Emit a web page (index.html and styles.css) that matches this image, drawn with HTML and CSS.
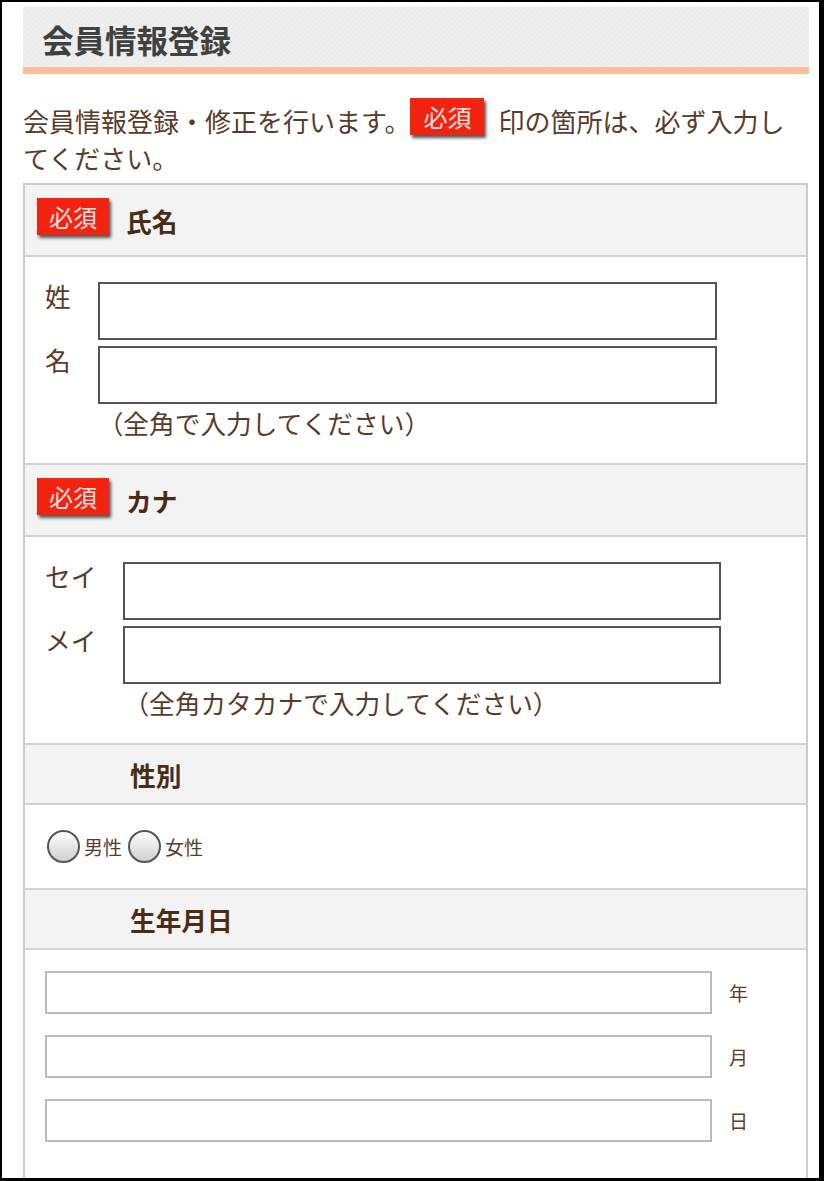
FILE: index.html
```html
<!DOCTYPE html>
<html lang="ja">
<head>
<meta charset="utf-8">
<title>会員情報登録</title>
<link rel="stylesheet" href="styles.css">
</head>
<body>
<div class="frame">
  <h1 class="title">会員情報登録</h1>
  <p class="intro">会員情報登録・修正を行います。<span class="badge badge-inline">必須</span>印の箇所は、必ず入力してください。</p>
  <div class="form">
    <div class="head req"><span class="badge">必須</span><span class="head-label">氏名</span></div>
    <div class="body pairs">
      <div class="pair-grid">
        <span class="pair-label">姓</span>
        <div class="field"><input class="text" type="text"></div>
        <span class="pair-label">名</span>
        <div class="field"><input class="text" type="text"></div>
        <p class="hint">（全角で入力してください）</p>
      </div>
    </div>

    <div class="head req"><span class="badge">必須</span><span class="head-label">カナ</span></div>
    <div class="body pairs">
      <div class="pair-grid">
        <span class="pair-label">セイ</span>
        <div class="field"><input class="text" type="text"></div>
        <span class="pair-label">メイ</span>
        <div class="field"><input class="text" type="text"></div>
        <p class="hint">（全角カタカナで入力してください）</p>
      </div>
    </div>

    <div class="head plain"><span class="head-label">性別</span></div>
    <div class="body gender">
      <input class="radio" type="radio" name="sex" id="male"><label class="radio-label" for="male">男性</label>
      <input class="radio" type="radio" name="sex" id="female"><label class="radio-label" for="female">女性</label>
    </div>

    <div class="head plain"><span class="head-label">生年月日</span></div>
    <div class="body dates">
      <input class="date-input" type="text"><span class="date-label">年</span>
      <input class="date-input" type="text"><span class="date-label">月</span>
      <input class="date-input" type="text"><span class="date-label">日</span>
    </div>
  </div>
</div>
</body>
</html>
```

FILE: styles.css
```css
* {
  box-sizing: border-box;
  margin: 0;
  padding: 0;
}

body {
  margin: 0;
  background: #fff;
  font-family: "Noto Sans CJK JP", "Noto Sans", sans-serif;
  color: #5b3b28;
}

.frame {
  width: 824px;
  height: 1181px;
  border-style: solid;
  border-color: #000;
  border-width: 2px 5px 3px 2px;
  padding: 5px 10px 0 21px;
  overflow: hidden;
  background: #fff;
}

.title {
  height: 67px;
  padding: 4px 0 0 19px;
  font-size: 31.5px;
  line-height: 56px;
  font-weight: 700;
  color: #404040;
  background: repeating-linear-gradient(-45deg, #efefef 0 2px, #ebebeb 2px 4px);
  border-bottom: 7px solid #fbbe9b;
}

.intro {
  margin-top: 28px;
  padding-right: 3px;
  font-size: 26px;
  line-height: 37px;
}

.badge {
  display: inline-block;
  height: 37px;
  padding: 0 12px;
  background: #f2230f;
  color: #ffe2e2;
  font-size: 24px;
  line-height: 37px;
  font-weight: 400;
  box-shadow: 2px 3px 3px #555;
}

.badge-inline {
  vertical-align: top;
  padding: 0 13px;
  margin: 0 14px 0 0;
  position: relative;
  top: -4px;
}

.form {
  width: 785px;
  margin-top: 7px;
  border: 2px solid #cccccc;
  border-bottom: none;
}

.head {
  display: flex;
  align-items: center;
  height: 60px;
  background: #f3f3f3;
  border-bottom: 2px solid #d3d3d3;
}

.head.req {
  height: 72px;
  padding-left: 12px;
}

.head.plain {
  padding-left: 105px;
}

.head .badge {
  margin: 0 17px 8px 0;
}

.head-label {
  font-size: 25.7px;
  font-weight: 700;
  color: #4a2b15;
}

.body {
  border-bottom: 2px solid #d3d3d3;
  background: #fff;
}

.pairs {
  padding: 25px 4px 25px 20px;
}

.pair-grid {
  display: grid;
  grid-template-columns: auto 1fr;
  column-gap: 27px;
  row-gap: 6px;
}

.pair-label {
  font-size: 25.7px;
  line-height: 28px;
}

.text {
  display: block;
  width: 88%;
  height: 58px;
  border: 2px solid #555;
  background: #fff;
  font: inherit;
  outline: none;
}

.hint {
  grid-column: 2;
  margin-top: -3px;
  font-size: 25.7px;
  line-height: 31px;
}

.gender {
  display: flex;
  align-items: center;
  height: 85px;
  padding-left: 22px;
}

.radio {
  appearance: none;
  -webkit-appearance: none;
  width: 33px;
  height: 33px;
  margin: 0;
  border: 2px solid #555;
  border-radius: 50%;
  background: linear-gradient(#fdfdfd, #cfcfcf);
}

.radio + .radio-label {
  margin-left: 4px;
}

.radio-label + .radio {
  margin-left: 6px;
}

.radio-label {
  font-size: 19px;
  line-height: 33px;
}

.dates {
  display: grid;
  grid-template-columns: 1fr 94px;
  align-items: center;
  row-gap: 21px;
  padding: 21px 0 60px 20px;
}

.date-input {
  width: 100%;
  height: 43px;
  border: 2px solid #bbbbbb;
  background: #fff;
  font: inherit;
  outline: none;
}

.date-label {
  padding-left: 17px;
  font-size: 19px;
}
```
